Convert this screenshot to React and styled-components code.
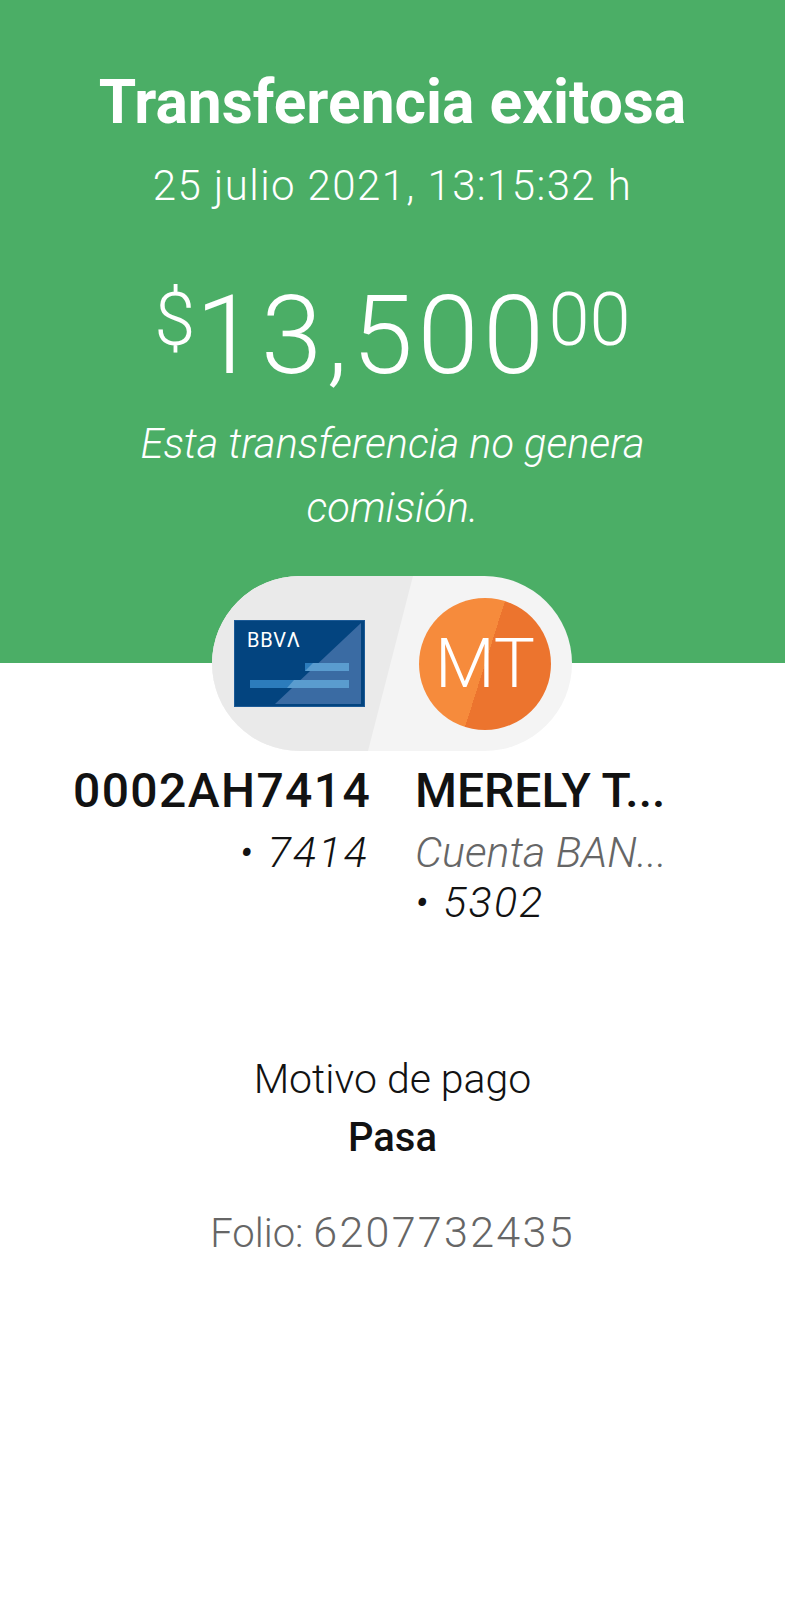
import React from 'react';
import styled, { createGlobalStyle } from 'styled-components';

const GlobalStyle = createGlobalStyle`
  html, body {
    margin: 0;
    padding: 0;
    background: #ffffff;
    font-family: Roboto, "Liberation Sans", sans-serif;
  }
`;

const App = () => {
    return (
        <Screen>
            <GlobalStyle />
            <Hero>
                <Title>Transferencia exitosa</Title>
                <DateText>25 julio 2021, 13:15:32 h</DateText>
                <Amount>
                    <Sup>$</Sup>
                    <Whole>13,500</Whole>
                    <Sup>00</Sup>
                </Amount>
                <Note>Esta transferencia no genera comisión.</Note>
            </Hero>
            <Pill>
                <Card>
                    <CardArt viewBox="0 0 131 87">
                        <path d="M127 3 L127 84 L41 84 Z" fill="#3a6ba3" />
                        <rect x="71" y="43" width="44" height="8" fill="#2c7cbc" />
                        <rect x="16" y="60" width="99" height="8" fill="#2c7cbc" />
                        <path d="M79 43 L115 43 L115 51 L71 51 Z" fill="#5a9ccf" />
                        <path d="M60 60 L115 60 L115 68 L53 68 Z" fill="#5a9ccf" />
                    </CardArt>
                    <BankName>BBVΛ</BankName>
                </Card>
                <Avatar>MT</Avatar>
            </Pill>
            <Accounts>
                <Account $align="right">
                    <AccountName $spaced>0002AH7414</AccountName>
                    <AccountLine $digits>• 7414</AccountLine>
                </Account>
                <Account>
                    <AccountName>MERELY T...</AccountName>
                    <AccountLine $muted>Cuenta BAN...</AccountLine>
                    <AccountLine $digits>• 5302</AccountLine>
                </Account>
            </Accounts>
            <Details>
                <MotiveLabel>Motivo de pago</MotiveLabel>
                <MotiveValue>Pasa</MotiveValue>
                <Folio>Folio: <FolioNumber>6207732435</FolioNumber></Folio>
            </Details>
        </Screen>
    );
};

export default App;


const Screen = styled.div`
  width: 785px;
  height: 1600px;
  overflow: hidden;
  background: #ffffff;
  color: #121212;
`;

const Hero = styled.div`
  height: 663px;
  box-sizing: border-box;
  padding-top: 63px;
  background: #4bae66;
  color: #ffffff;
  display: flex;
  flex-direction: column;
  align-items: center;
  text-align: center;
`;

const Title = styled.h1`
  margin: 0;
  font-size: 60.5px;
  line-height: 80px;
  font-weight: 700;
  white-space: nowrap;
`;

const DateText = styled.div`
  margin-top: 15px;
  font-size: 42px;
  line-height: 56px;
  font-weight: 300;
  letter-spacing: 1.4px;
`;

const Amount = styled.div`
  margin-top: 57px;
  font-size: 110px;
  line-height: 130px;
  font-weight: 300;
  display: flex;
  align-items: flex-start;
`;

const Whole = styled.span`
  letter-spacing: 4.5px;
`;

const Sup = styled.span`
  margin-top: 4px;
  font-size: 74px;
  line-height: 90px;
`;

const Note = styled.p`
  margin: 11px 0 0;
  width: 580px;
  font-size: 41.5px;
  line-height: 64px;
  font-weight: 300;
  font-style: italic;
`;

const Pill = styled.div`
  position: relative;
  width: 360px;
  height: 175px;
  margin: -87px 0 0 212px;
  border-radius: 88px;
  background: #f4f4f4;
  overflow: hidden;
  display: flex;
  align-items: center;
  padding-left: 22px;
  box-sizing: border-box;
  gap: 54px;

  &::before {
    content: '';
    position: absolute;
    inset: 0;
    background: #eaeaea;
    clip-path: polygon(0 0, 201px 0, 156px 100%, 0 100%);
  }
`;

const Card = styled.div`
  position: relative;
  width: 131px;
  height: 87px;
  flex: none;
  background: #03447f;
  border: 1px solid #1c5a96;
  box-sizing: border-box;
`;

const CardArt = styled.svg`
  position: absolute;
  inset: -1px;
  width: 131px;
  height: 87px;
`;

const BankName = styled.span`
  position: absolute;
  left: 12px;
  top: 9px;
  color: #ffffff;
  font-size: 20px;
  line-height: 20px;
  font-weight: 400;
  letter-spacing: 0.8px;
`;

const Avatar = styled.div`
  position: relative;
  width: 132px;
  height: 132px;
  flex: none;
  border-radius: 50%;
  background: linear-gradient(107.6deg, #f68b3c 50%, #ec742e 50%);
  color: #ffffff;
  font-size: 69px;
  font-weight: 300;
  display: flex;
  align-items: center;
  justify-content: center;
`;

const Accounts = styled.div`
  display: flex;
  padding-top: 10px;
  padding-left: 73px;
  gap: 46px;
`;

const Account = styled.div`
  width: ${(props) => (props.$align === 'right' ? '296px' : '250px')};
  text-align: ${(props) => props.$align || 'left'};
  white-space: nowrap;
`;

const AccountName = styled.div`
  font-size: 48px;
  line-height: 60px;
  font-weight: 500;
  letter-spacing: ${(props) => (props.$spaced ? '1.4px' : '0')};
`;

const AccountLine = styled.div`
  font-size: 43px;
  line-height: 50px;
  font-weight: 300;
  font-style: italic;
  color: ${(props) => (props.$muted ? '#666666' : '#121212')};
  letter-spacing: ${(props) => (props.$digits ? '2.2px' : '0')};
  &:nth-child(2) {
    margin-top: 6px;
  }
`;

const Details = styled.div`
  margin-top: 123px;
  display: flex;
  flex-direction: column;
  align-items: center;
`;

const MotiveLabel = styled.div`
  font-size: 41px;
  line-height: 59px;
  font-weight: 300;
`;

const MotiveValue = styled.div`
  font-size: 40px;
  line-height: 58px;
  font-weight: 500;
`;

const Folio = styled.div`
  margin-top: 36px;
  font-size: 40px;
  line-height: 58px;
  font-weight: 300;
  color: #666666;
`;

const FolioNumber = styled.span`
  font-size: 43px;
  letter-spacing: 2.3px;
`;
